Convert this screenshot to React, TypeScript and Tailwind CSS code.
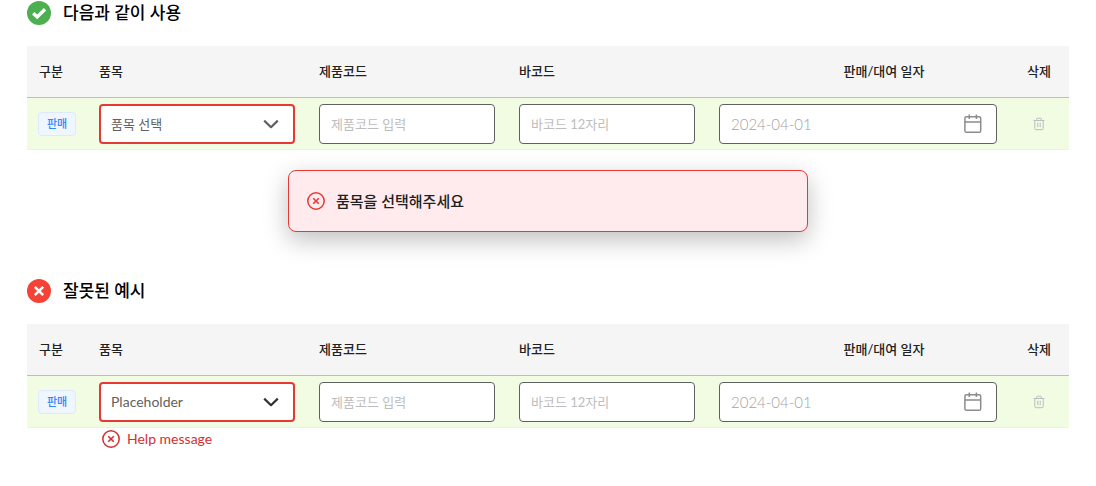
import React from "react";

type TableProps = {
  selectLabel: string;
  selectClass: string;
  chevronClass: string;
  help?: string;
};

function CrossCircle() {
  return (
    <svg width="18" height="18" viewBox="0 0 18 18" fill="none" stroke="currentColor" aria-hidden="true">
      <circle cx="9" cy="9" r="8.2" strokeWidth="1.5" />
      <path d="M6.2 6.2l5.6 5.6M11.8 6.2l-5.6 5.6" strokeWidth="1.6" />
    </svg>
  );
}

function Title({ ok, children }: { ok: boolean; children: React.ReactNode }) {
  return (
    <h2 className="flex h-6 items-center gap-3 text-[17px] leading-6 font-medium text-black">
      <svg width="24" height="24" viewBox="0 0 24 24" fill="none" aria-hidden="true">
        <circle cx="12" cy="12" r="12" fill={ok ? "#4caf50" : "#f44336"} />
        {ok ? (
          <path d="M6.2 12.2l4 3.8 7.8-7.8" stroke="#fff" strokeWidth="3.4" />
        ) : (
          <path d="M7.8 7.8l8.4 8.4M16.2 7.8l-8.4 8.4" stroke="#fff" strokeWidth="2.5" />
        )}
      </svg>
      {children}
    </h2>
  );
}

const fieldClass =
  "block h-10 w-full rounded border border-[#616161] bg-white px-[11px] text-[13px] leading-5 text-[#616161] placeholder:text-[#bdbdbd] placeholder:opacity-100";
const headClass = "h-[52px] border-b border-[#bdbdbd] px-3 pb-0.5 text-left font-medium";
const cellClass = "h-[52px] border-b border-[#eeeeee] px-3";

function ItemTable({ selectLabel, selectClass, chevronClass, help }: TableProps) {
  return (
    <table className="w-full table-fixed border-separate border-spacing-0 text-[13px] leading-5 text-[#212121]">
      <colgroup>
        <col className="w-[60px]" />
        <col className="w-[220px]" />
        <col className="w-[200px]" />
        <col className="w-[200px]" />
        <col />
        <col className="w-[60px]" />
      </colgroup>
      <thead className="bg-[#f5f5f5]">
        <tr>
          <th scope="col" className={headClass}>구분</th>
          <th scope="col" className={headClass}>품목</th>
          <th scope="col" className={headClass}>제품코드</th>
          <th scope="col" className={headClass}>바코드</th>
          <th scope="col" className="h-[52px] border-b border-[#bdbdbd] pr-3 pb-0.5 pl-16 text-center font-medium">
            판매/대여 일자
          </th>
          <th scope="col" className="h-[52px] border-b border-[#bdbdbd] pb-0.5 text-center font-medium">삭제</th>
        </tr>
      </thead>
      <tbody className="bg-[#f2fce3]">
        <tr>
          <td className={cellClass}>
            <span className="-mx-px flex h-6 w-[38px] items-center justify-center rounded border border-[#dbeafe] bg-[#eff6ff] text-[11px] leading-4 font-medium text-[#2f88ff]">
              판매
            </span>
          </td>
          <td className={cellClass}>
            <div className="relative">
              <select
                aria-label="품목"
                className={
                  "block h-10 w-full appearance-none rounded border-2 border-[#e53935] bg-white px-2.5 leading-5 text-[#616161] " +
                  selectClass
                }
              >
                <option>{selectLabel}</option>
              </select>
              <svg
                className={"pointer-events-none absolute top-3 right-4 " + chevronClass}
                width="16"
                height="16"
                viewBox="0 0 16 16"
                fill="none"
                stroke="currentColor"
                strokeWidth="2.2"
                aria-hidden="true"
              >
                <path d="M1.2 4.6L8 11.2l6.8-6.6" strokeLinejoin="round" />
              </svg>
              {help && (
                <p className="absolute top-full left-[3px] mt-2 flex items-center gap-[7px] text-[14px] leading-[18px] text-[#d32f2f]">
                  <CrossCircle />
                  {help}
                </p>
              )}
            </div>
          </td>
          <td className={cellClass}>
            <input aria-label="제품코드" placeholder="제품코드 입력" className={fieldClass} />
          </td>
          <td className={cellClass}>
            <input aria-label="바코드" placeholder="바코드 12자리" className={fieldClass} />
          </td>
          <td className={cellClass}>
            <div className="relative">
              <input
                aria-label="판매/대여 일자"
                placeholder="2024-04-01"
                className="block h-10 w-full rounded border border-[#616161] bg-white px-[11px] text-[15px] leading-5 placeholder:font-light placeholder:text-[#a3a3a3] placeholder:opacity-100"
              />
              <svg
                className="pointer-events-none absolute top-2.5 right-3.5 text-[#8c8c8c]"
                width="20"
                height="20"
                viewBox="0 0 20 20"
                fill="none"
                stroke="currentColor"
                strokeWidth="1.5"
                aria-hidden="true"
              >
                <rect x="1.9" y="2.7" width="15.8" height="15.6" rx="1.6" />
                <path d="M1.9 8h15.8M6.3 .6v4.4M13.4 .6v4.4" />
              </svg>
            </div>
          </td>
          <td className="h-[52px] border-b border-[#eeeeee]">
            <button type="button" aria-label="삭제" className="mx-auto block text-[#bdbdbd]">
              <svg width="12" height="14" viewBox="0 0 12 14" fill="none" stroke="currentColor" aria-hidden="true">
                <path d="M.6 3.5h10.8M1.8 3.5v8q0 1.2 1.2 1.2h6q1.2 0 1.2-1.2v-8M3.7 3.3V2q0-.8.8-.8h3q.8 0 .8.8v1.3" />
                <path d="M4.8 5.6v4.6M7.2 5.6v4.6" />
              </svg>
            </button>
          </td>
        </tr>
      </tbody>
    </table>
  );
}

export default function App() {
  return (
    <main className="min-h-screen bg-white px-[27px] pt-px pb-10 font-['Lato','Noto_Sans_CJK_KR',sans-serif]">
      <section className="flex flex-col gap-[21px]">
        <Title ok>다음과 같이 사용</Title>
        <ItemTable selectLabel="품목 선택" selectClass="text-[13px]" chevronClass="text-[#616161]" />
      </section>
      <div
        role="alert"
        className="mx-auto mt-5 flex h-[62px] w-full max-w-[520px] items-center gap-[11px] rounded-lg border border-[#e53935] bg-[#ffebee] px-[18px] text-[15px] leading-6 font-medium text-[#212121] shadow-[0_8px_24px_rgba(0,0,0,0.25)]"
      >
        <span className="text-[#e53935]">
          <CrossCircle />
        </span>
        품목을 선택해주세요
      </div>
      <section className="mt-[47px] flex flex-col gap-[21px]">
        <Title ok={false}>잘못된 예시</Title>
        <ItemTable
          selectLabel="Placeholder"
          selectClass="text-[14px]"
          chevronClass="text-[#333333]"
          help="Help message"
        />
      </section>
    </main>
  );
}
